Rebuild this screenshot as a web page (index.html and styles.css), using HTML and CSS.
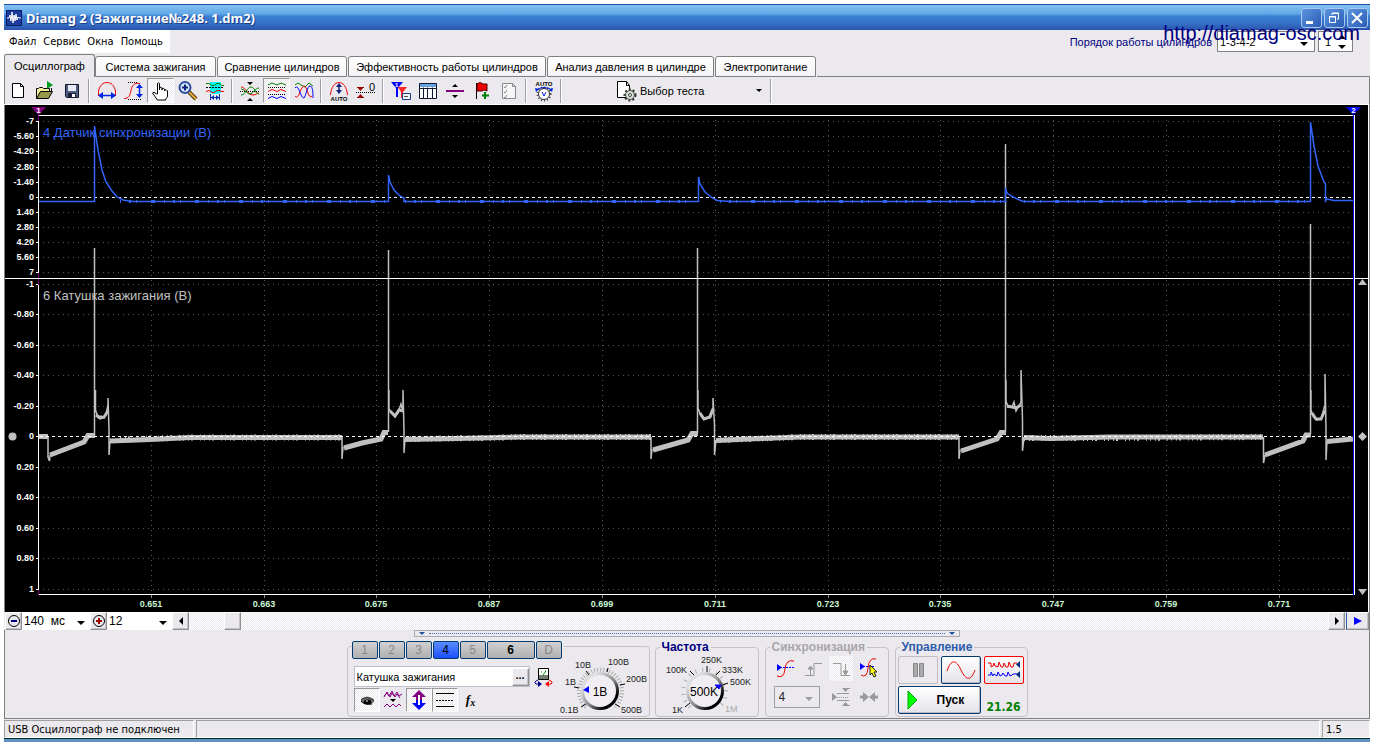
FILE: index.html
```html
<!DOCTYPE html>
<html lang="ru">
<head>
<meta charset="utf-8">
<title>Diamag 2</title>
<link rel="stylesheet" href="styles.css">
</head>
<body>
<div class="window">
  <header class="titlebar">
    <svg class="app-icon" viewBox="0 0 16 16"><rect width="16" height="16" fill="#1c3c9c"/><rect x=".5" y=".5" width="15" height="15" fill="none" stroke="#0a1c68"/><path d="M1 8h2l1-3 1 6 1-9 1 11 1-8 1 6 1-7 1 6 1-3 1 1h2" fill="none" stroke="#fff"/></svg>
    <h1 class="title">Diamag 2 (Зажигание№248. 1.dm2)</h1>
    <button class="win-btn" aria-label="Свернуть"><svg viewBox="0 0 18 18"><path d="M4 12h7v3H4z" fill="#fff"/></svg></button>
    <button class="win-btn" aria-label="Восстановить"><svg viewBox="0 0 18 18" fill="none" stroke="#fff"><path d="M7 6V4.500h6.500V10H12M7 4h7"/><path d="M4.500 7.500h6v6h-6zM4 8h7"/></svg></button>
    <button class="win-btn" aria-label="Закрыть"><svg viewBox="0 0 18 18"><path d="M4 4l10 10M14 4L4 14" stroke="#fff" stroke-width="2"/></svg></button>
    <span class="site">http://diamag-osc.com</span>
  </header>

  <div class="menurow">
    <nav class="menu"><button>Файл</button><button>Сервис</button><button>Окна</button><button>Помощь</button></nav>
    <div class="order">
      <label for="order">Порядок работы цилиндров</label>
      <span class="combo order-combo"><select id="order"><option>1-3-4-2</option></select></span>
      <span class="spin"><input type="text" value="1" aria-label="Цилиндр"><svg viewBox="0 0 8 14"><path d="M0 4l4-4 4 4zM0 10h8l-4 4z"/></svg></span>
    </div>
  </div>

  <nav class="tabs">
    <button class="tab active">Осциллограф</button><button class="tab">Система зажигания</button><button class="tab">Сравнение цилиндров</button><button class="tab">Эффективность работы цилиндров</button><button class="tab">Анализ давления в цилиндре</button><button class="tab">Электропитание</button><span class="tab-rest"></span>
  </nav>

  <div class="toolbar">
    <button class="tool" aria-label="Новый"><svg viewBox="0 0 24 24"><path d="M6.500 4.500h8l3 3v11h-11zM14.500 4.500v3h3" fill="#fff" stroke="#000"/></svg></button>
    <button class="tool" aria-label="Открыть"><svg viewBox="0 0 24 24"><path d="M3.500 19.500v-10h2l1-1h3l1 1h6v3" fill="#f4eca0" stroke="#000"/><path d="M3.500 19.500l4-7h12l-4 7z" fill="#98984c" stroke="#000"/><path d="M14 2l6 4-6 4z" fill="#009a20"/><path d="M18.500 9v4" stroke="#000"/></svg></button>
    <button class="tool" aria-label="Сохранить"><svg viewBox="0 0 24 24"><path d="M5.500 5.500h13v13h-12l-1-1z" fill="#526080" stroke="#101830"/><path d="M8 6h8v6H8z" fill="#e8ecf4"/><path d="M8 14h8v5H8z" fill="#18203c"/><path d="M12 15h3v3h-3z" fill="#fff"/></svg></button>
    <i class="sep"></i>
    <button class="tool" aria-label="Период"><svg viewBox="0 0 24 24"><path d="M3.500 17V12C5 6 8 3.500 12 3.500S19 6 20.500 12v5" fill="none" stroke="#e00"/><path d="M4 16.500h16" stroke="#0028e8" stroke-width="1.500"/><path d="M8 13v7l-5-3.500zM16 13v7l5-3.500z" fill="#0028e8"/></svg></button>
    <button class="tool" aria-label="Амплитуда"><svg viewBox="0 0 24 24"><path d="M2 19.500c5 0 6-3 7-8s3-8 9-7" fill="none" stroke="#e00"/><path d="M6 3.500h10M6 20.500h13" stroke="#000" stroke-dasharray="1 1"/><path d="M17.500 6v12" stroke="#0028e8" stroke-width="1.500"/><path d="M14 9l3.500-4L21 9zM14 15l3.500 4 3.500-4z" fill="#0028e8"/></svg></button>
    <button class="tool pressed" aria-label="Рука"><svg viewBox="0 0 24 24"><path d="M8.500 15V4.500q1.500-1.500 2 0V11V8.500q2-1 2.500 1V11V9.500q2-1 2.500 1V12v-1q2-1 3 1v5c0 2-2 2-2 4h-8l-5-7q1-2 4 1z" fill="#fff" stroke="#000"/></svg></button>
    <button class="tool" aria-label="Масштаб"><svg viewBox="0 0 24 24"><path d="M13 13l7 7" stroke="#5a3808" stroke-width="4"/><path d="M13 13l7 7" stroke="#dcae3c" stroke-width="2"/><circle cx="9" cy="8.500" r="5.500" fill="#d8ecfa" stroke="#304ca0" stroke-width="2"/><path d="M6 8.500h6M9 5.500v6" stroke="#102080" stroke-width="2"/></svg></button>
    <button class="tool" aria-label="Фильтр"><svg viewBox="0 0 24 24"><path d="M7 3h11v11h-2v1H9v-1H7z" fill="#00f4f4"/><path d="M3 4.500h3l3 2h2l3-2h2l3 2h2" fill="none" stroke="#008000"/><path d="M3 8.500h18" stroke="#000" stroke-dasharray="2 1"/><path d="M3 12.500l3-1 3 2h2l3-2h2l3 1h2" fill="none" stroke="#e00"/><path d="M7.500 15v6m9-6v6M8 18.500h8" stroke="#0030b0"/><path d="M11 16v5l-3-2.500zM13 16v5l3-2.500z" fill="#0030b0"/></svg></button>
    <i class="sep"></i>
    <button class="tool" aria-label="Совместить"><svg viewBox="0 0 24 24"><path d="M2 12.500h20" stroke="#000" stroke-dasharray="1 1"/><path d="M3 8c5 0 6 8 12 8 3 0 4-2 6-2" fill="none" stroke="#e00"/><path d="M3 16c5 0 6-8 10-8 4 0 4 7 8 7M3 10c4 0 6 5 9 5s5-6 9-6" fill="none" stroke="#008000"/><path d="M9 3h6l-3 3zM9 22h6l-3-3z"/></svg></button>
    <button class="tool pressed" aria-label="Разделить"><svg viewBox="0 0 24 24" fill="none"><path d="M3 6l4-2 5 2 4-2 5 2" stroke="#008000"/><path d="M3 12.500l4-2 5 2 4-2 5 2" stroke="#e00"/><path d="M3 19.500l4-2 5 2 4-2 5 2" stroke="#00f"/><path d="M3 8.500h18M3 15.500h18" stroke="#000" stroke-dasharray="1 1"/></svg></button>
    <button class="tool" aria-label="Наложить"><svg viewBox="0 0 24 24" fill="none"><path d="M3 6l3-2 3 2 4 2 4-4 4 3" stroke="#008000"/><path d="M3 17c4 5 5-9 9-10 4 1 4 14 8 10" stroke="#e00"/><path d="M3 9c4-5 5 10 9 10 2-2 3-12 6-12s3 8 3 12" stroke="#00f"/></svg></button>
    <i class="sep"></i>
    <button class="tool" aria-label="Автомасштаб"><svg viewBox="0 0 24 24"><path d="M3.500 16C4 8 8 3.500 12 3.500S20 8 20.500 16" fill="none" stroke="#e00"/><path d="M12 6v8" stroke="#102080" stroke-width="1.500"/><path d="M9 8l3-4 3 4zM9 11l3 4 3-4z" fill="#102080"/><text class="tiny" x="12" y="21.500" text-anchor="middle">AUTO</text></svg></button>
    <button class="tool" aria-label="Ноль"><svg viewBox="0 0 24 24"><path d="M3 8h7l-3.500 4zM3 19h7l-3.500-4z" fill="#900"/><path d="M3 8.500h7M3 18.500h7" stroke="#900"/><path d="M2 13.500h20" stroke="#000" stroke-dasharray="1 1"/><text class="zero" x="15" y="12">0</text></svg></button>
    <i class="sep"></i>
    <button class="tool" aria-label="Маркеры"><svg viewBox="0 0 24 24"><path d="M2 3h12L9 9v9H7V9z" fill="#00f"/><path d="M9 8h9l-4 5v6h-2v-6z" fill="#f00" fill-opacity=".85"/><path d="M13.500 14.500h8v6h-8z" fill="#eef4fc" stroke="#1c3c88"/><text class="tiny white" x="6" y="8">1</text><path d="M15 17.500h4" stroke="#555"/></svg></button>
    <button class="tool" aria-label="Таблица"><svg viewBox="0 0 24 24"><path d="M3.500 4.500h17v15h-17z" fill="#fff" stroke="#101830"/><path d="M4 5h16v3H4z" fill="#6aa4e0"/><path d="M3.500 9.500h17m-13-1v11m4-11v11m5-11v11" stroke="#101830" fill="none"/></svg></button>
    <button class="tool" aria-label="Линия"><svg viewBox="0 0 24 24"><path d="M3 12h18" stroke="#800080" stroke-width="2"/><path d="M9 8h6l-3-3zM9 16h6l-3 3z"/></svg></button>
    <button class="tool" aria-label="Флаг"><svg viewBox="0 0 24 24"><path d="M6.500 4v16" stroke="#000"/><path d="M7 5q3-3 6 0h4v7q-3-2-5 0H7z" fill="#e00" stroke="#500"/><path d="M15 13v7m-3-3.500h7" stroke="#008000" stroke-width="2"/></svg></button>
    <button class="tool" aria-label="Список"><svg viewBox="0 0 24 24" fill="none" stroke="#888"><path d="M5.500 4.500h10l3 3v12h-13z" fill="#f6f6f6"/><path d="M15.500 4.500v3h3M7 8l1 1 2-3m-3 7l1 1 2-3m-3 7l1 1 2-3"/></svg></button>
    <i class="sep"></i>
    <button class="tool" aria-label="Авто вольтметр"><svg viewBox="0 0 24 24"><text class="tiny" x="12" y="7" text-anchor="middle">AUTO</text><circle cx="12" cy="15" r="6.500" fill="none" stroke="#333" stroke-dasharray="1 2" stroke-width="2"/><circle cx="12" cy="15" r="5.500" fill="#fff" stroke="#333"/><path d="M4 11q8-5 16 0" fill="none" stroke="#0020e0"/><path d="M3 9l4 1-3 3zM21 9l-4 1 3 3z" fill="#0020e0"/><path d="M10 13l2 4 2-4" fill="none" stroke="#0020e0"/></svg></button>
    <i class="sep"></i>
    <button class="test-select"><svg viewBox="0 0 24 24"><path d="M4.500 2.500h9l3 4v12h-12z" fill="#fff" stroke="#000"/><path d="M13.500 2.500v4h3" fill="none" stroke="#000"/><circle cx="17" cy="16" r="5.500" fill="none" stroke="#333" stroke-width="2" stroke-dasharray="2 2"/><circle cx="17" cy="16" r="4.500" fill="#d0e0d0" stroke="#444"/><circle cx="17" cy="16" r="1.500" fill="#fff" stroke="#444"/></svg><span>Выбор теста</span><i class="caret"></i></button>
    <i class="sep"></i>
  </div>

  <main class="plot">
    <svg class="chart" viewBox="5 105 1363 507">
      <rect x="5" y="105" width="1363" height="507"/>
      <g class="grid">
        <path d="M43 121.500H1352M43 136.500H1352M43 151.500H1352M43 167.500H1352M43 182.500H1352M43 212.500H1352M43 227.500H1352M43 242.500H1352M43 257.500H1352M43 272.500H1352"/>
        <path d="M43 284.500H1352M43 314.500H1352M43 345.500H1352M43 375.500H1352M43 406.500H1352M43 467.500H1352M43 497.500H1352M43 528.500H1352M43 558.500H1352M43 589.500H1352"/>
        <path d="M151.500 120V594M264.500 120V594M376.500 120V594M489.500 120V594M602.500 120V594M715.500 120V594M828.500 120V594M940.500 120V594M1053.500 120V594M1166.500 120V594M1279.500 120V594"/>
      </g>
      <path class="coil thick" d="M39 436.500H48M50 455L84 442L88 435.500H95M110 441L150 439.500L190 437.500H342M344 448L362 443L381 439L384 432.500H388M405 439.500L480 438L520 437H651M653 450L688 440L692 433.500H698M716 440.500L760 438.500L800 437H959M961 451L997 439L1001 432.500H1006M1024 437.500L1050 438.500L1110 437H1263M1265 455L1303 441L1306 435H1311M1327 441.500L1353 439"/>
      <path class="noise" d="M120 439.500L190 437.500H342M410 439L480 438L520 437H651M720 440L800 437H959M1024 438H1110L1262 437"/>
      <path class="coil" d="M48 436V457L49.500 461L50 455M94.500 436V248M95.500 390V410L98 417L101 416L104 418L106 414L108 405V398L109 430V455L110 441"/>
      <path class="coil" d="M342 437V459L343 447M388.500 432V250M389 390V409L391 412L395 417L398 413L401 404L403 412V390L404 430V453L405 439"/>
      <path class="coil" d="M651 437V459L652 449M697.500 433V248M698 390V408L701 416L705 419L709 417L713 408V398L714.500 425V455L716 440"/>
      <path class="coil" d="M959 437V459L960 450M1005.500 432V144M1006 380V401L1008 407L1012 407L1014 402L1016 411L1021 402V370L1022.500 420V451L1024 437"/>
      <path class="coil" d="M1263.500 437V463L1265 455M1310.500 434V224M1311 390V410L1313 416L1317 420L1321 419L1325 405V374L1326 430V460L1327 441"/>
      <path class="cluster" d="M96 415l4 3 4-1 4-6M390 411l5 5 4-6 4 1M700 413l4 6 6-2 3-8M1007 406l5 1 4 1 5-3M1312 413l4 6 5 0 4-9"/>
      <path class="zero-line" d="M40 197.500H1353M40 436.500H1353"/>
      <path class="sync" d="M39 201.500H94.500V126L98 150L102 170L106 182L112 191L117 197L123 200L133 201.500H388.500V175L390 182L394 190L400 196L404 198V201.500H698.500V177L700 184L705 192L711 197L717 200.500L730 201.500H1005.500V188L1007 193L1013 197L1023 201.500H1310.500V122L1314 146L1318 166L1324 182L1325.500 184V201L1327 199L1334 200.500H1353"/>
      <path class="sync-noise" d="M120 201.500H388M405 201.500H698M720 201.500H1005M1024 201.500H1310"/>
      <path class="frame" d="M38.500 115V595M38 115.500H1355M5 278.500H1368M38 594.500H1355M1354.500 115V595"/>
      <path class="frame" d="M36 121.500h3M36 136.500h3M36 151.500h3M36 167.500h3M36 182.500h3M36 197.500h3M36 212.500h3M36 227.500h3M36 242.500h3M36 257.500h3M36 272.500h3M36 284.500h3M36 314.500h3M36 345.500h3M36 375.500h3M36 406.500h3M36 436.500h3M36 467.500h3M36 497.500h3M36 528.500h3M36 558.500h3M36 589.500h3"/>
      <path class="frame dim" d="M151.500 595v3M264.500 595v3M376.500 595v3M489.500 595v3M602.500 595v3M715.500 595v3M828.500 595v3M940.500 595v3M1053.500 595v3M1166.500 595v3M1279.500 595v3"/>
      <path d="M1353.500 107V595" stroke="#0000e8"/>
      <path d="M38.500 112V121M38.500 273V278M38.500 279V285M38.500 590V595" stroke="#800080"/>
      <path d="M31 107h15l-7.500 8z" fill="#800080"/><path d="M1346 107h15l-7.500 8z" fill="#00f"/>
      <g class="marker-no"><text x="38.500" y="113">1</text><text x="1353.500" y="113">2</text></g>
      <g class="handles"><circle cx="12.500" cy="436.500" r="4"/><path d="M1358 285h9l-4.500-6zM1358 589h9l-4.500 6zM1362.500 432l4.500 4.500-4.500 4.500-4.500-4.500z"/></g>
      <g class="y-labels">
        <text x="34" y="124">-7</text><text x="34" y="139">-5.60</text><text x="34" y="154">-4.20</text><text x="34" y="170">-2.80</text><text x="34" y="185">-1.40</text><text x="34" y="200">0</text><text x="34" y="215">1.40</text><text x="34" y="230">2.80</text><text x="34" y="245">4.20</text><text x="34" y="260">5.60</text><text x="34" y="275">7</text>
        <text x="34" y="287">-1</text><text x="34" y="317">-0.80</text><text x="34" y="348">-0.60</text><text x="34" y="378">-0.40</text><text x="34" y="409">-0.20</text><text x="34" y="439">0</text><text x="34" y="470">0.20</text><text x="34" y="500">0.40</text><text x="34" y="531">0.60</text><text x="34" y="561">0.80</text><text x="34" y="592">1</text>
      </g>
      <g class="x-labels">
        <text x="151" y="607">0.651</text><text x="264" y="607">0.663</text><text x="376" y="607">0.675</text><text x="489" y="607">0.687</text><text x="602" y="607">0.699</text><text x="715" y="607">0.711</text><text x="828" y="607">0.723</text><text x="940" y="607">0.735</text><text x="1053" y="607">0.747</text><text x="1166" y="607">0.759</text><text x="1279" y="607">0.771</text>
      </g>
      <text class="channel-name blue" x="43" y="137">4 Датчик синхронизации (В)</text>
      <text class="channel-name" x="43" y="300">6 Катушка зажигания (В)</text>
    </svg>
  </main>

  <div class="timeline">
    <button class="raised" aria-label="Уменьшить"><svg viewBox="0 0 16 16"><circle cx="8" cy="8" r="5.500" fill="none" stroke="#000"/><path d="M5 8h6" stroke="#000080" stroke-width="2"/></svg></button>
    <span class="combo time-combo"><select aria-label="Развёртка"><option>140&nbsp; мс</option></select></span>
    <button class="raised" aria-label="Увеличить"><svg viewBox="0 0 16 16"><circle cx="8" cy="8" r="5.500" fill="none" stroke="#000"/><path d="M5 8h6M8 5v6" stroke="#900" stroke-width="2"/></svg></button>
    <span class="combo div-combo"><select aria-label="Деления"><option>12</option></select></span>
    <button class="raised" aria-label="Назад"><svg viewBox="0 0 16 16"><path d="M10 4v8L6 8z"/></svg></button>
    <div class="track"><button class="raised thumb" aria-label="Прокрутка"></button></div>
    <button class="raised" aria-label="Вперёд"><svg viewBox="0 0 16 16"><path d="M6 4v8l4-4z"/></svg></button>
    <button class="raised play" aria-label="Воспроизвести"><svg viewBox="0 0 16 16"><path d="M4 4v8l8-4z" fill="#00f"/></svg></button>
  </div>

  <section class="controls">
    <div class="splitter"><i class="caret"></i><span></span><i class="caret"></i></div>
    <div class="groups">
      <div class="group channel-group">
        <div class="channel-main">
          <div class="channels"><button>1</button><button>2</button><button>3</button><button class="on">4</button><button>5</button><button class="current">6</button><button>D</button></div>
          <div class="name-row">
            <span class="name-box"><input type="text" value="Катушка зажигания" aria-label="Имя канала"><button class="raised more" aria-label="Выбрать">...</button></span>
            <button class="tool" aria-label="Датчик"><svg viewBox="0 0 24 24"><path d="M6.500 3.500h10v11h-10z" fill="#fff" stroke="#000"/><path d="M7 10h9v4H7z" fill="#708070"/><path d="M9 7h1m3-1h1m-3 4l3-4" stroke="#080"/><path d="M6 15q-5 2-2 4h3" fill="none" stroke="#000090"/><path d="M6 16l4 3-4 3z" fill="#000090"/><path d="M17 15q5 2 2 4h-3" fill="none" stroke="#f00"/><path d="M17 16l-4 3 4 3z" fill="#f00"/></svg></button>
          </div>
          <div class="mode-row">
            <button class="tool pressed" aria-label="Показать"><svg viewBox="0 0 24 24"><path d="M6 11q6-5 13 0v3q-5 5-13 0z" fill="#777"/><path d="M6 12q6-5 13 1" fill="none" stroke="#333"/><ellipse cx="12.500" cy="14" rx="4" ry="2.500"/><path d="M6 13q3 4 11 3" stroke="#000" fill="none"/><path d="M11 13h2" stroke="#fff"/></svg></button>
            <button class="tool" aria-label="Сглаживание"><svg viewBox="0 0 24 24" fill="none" stroke="#800080"><path d="M3 9l3-5 2 4 3-5 2 5 3-4 2 4 3-2M3 8l3-3 3 4 2-4 3 4 2-3 3 4"/><path d="M3 19l3-3 3 3 3-3 3 3 3-3 2 2"/><path d="M9 11h6l-3 3z" fill="#000" stroke="none"/></svg></button>
            <button class="tool pressed" aria-label="Сдвиг"><svg viewBox="0 0 24 24"><path d="M12 2l7 7h-4v3H9V9H5z" fill="#800080"/><path d="M12 22l7-7h-4v-3H9v3H5z" fill="#00f"/><path d="M12 7v10" stroke="#fff" stroke-width="2"/></svg></button>
            <button class="tool pressed" aria-label="Уровни"><svg viewBox="0 0 24 24"><path d="M3 5.500h18M3 18.500h18" stroke="#000"/><path d="M3 12.500h18" stroke="#000" stroke-dasharray="2 1"/></svg></button>
            <button class="tool fx" aria-label="Функция"><i>f</i><i class="sub">x</i></button>
          </div>
        </div>
        <svg class="dial" viewBox="557 652 92 62" role="img" aria-label="Диапазон 1В">
          <defs><linearGradient id="rim" x1="0" y1="0" x2="1" y2="1"><stop offset=".2" stop-color="#ddd"/><stop offset=".55" stop-color="#888"/><stop offset=".8" stop-color="#000"/></linearGradient></defs>
          <path d="M586 706A21.500 21.500 0 1 1 615 706" fill="none" stroke="#aaa" stroke-width="4" stroke-dasharray="1 2"/>
          <path d="M581 706l5-3M574 686l5 1M586 670l3 4M608 667l-1 4M625 683l-5 1M620 706l-5-3" stroke="#000"/>
          <circle cx="600" cy="690" r="17.500" fill="#f0eef2" stroke="url(#rim)" stroke-width="3"/>
          <path d="M583 689l6-4v7z" fill="#00f"/>
          <text class="value" x="600" y="695">1В</text>
          <g class="scale"><text x="560" y="712">0.1В</text><text x="565" y="684">1В</text><text x="575" y="667">10В</text><text x="608" y="664">100В</text><text x="626" y="681">200В</text><text x="621" y="712">500В</text></g>
        </svg>
      </div>

      <fieldset class="group freq-group">
        <legend>Частота</legend>
        <svg class="dial" viewBox="656 652 102 62" role="img" aria-label="Частота 500K">
          <path d="M690 706A21.500 21.500 0 1 1 719 706" fill="none" stroke="#aaa" stroke-width="4" stroke-dasharray="1 6"/>
          <path d="M685 706l5-4M690 670l4 4M707 665v6M720 670l-4 4M728 682l-5 2" stroke="#000"/>
          <circle cx="705" cy="690" r="17.500" fill="#f0eef2" stroke="url(#rim)" stroke-width="3"/>
          <path d="M715 684l6 0-2 4z" fill="#00f" stroke="#00f"/>
          <text class="value" x="704" y="695">500K</text>
          <g class="scale"><text x="672" y="712">1K</text><text x="666" y="672">100K</text><text x="701" y="662">250K</text><text x="722" y="672">333K</text><text x="730" y="684">500K</text><text class="off" x="725" y="711">1M</text></g>
        </svg>
      </fieldset>

      <fieldset class="group sync-group">
        <legend>Синхронизация</legend>
        <div class="sync-icons">
          <button class="tool" aria-label="По уровню"><svg viewBox="0 0 24 24"><path d="M4 19q7 3 8-7t9-8" fill="none" stroke="#e00"/><path d="M4 10.500h17" stroke="#00f" stroke-dasharray="2 1"/><path d="M4 7v7l5-3.500z" fill="#00f"/></svg></button>
          <button class="tool" aria-label="Передний фронт"><svg viewBox="0 0 24 24" fill="none" stroke="#999"><path d="M4 18.500h9v-12h8"/><path d="M9.500 18v-9M7 12l2.500-3 2.500 3z" fill="#999"/></svg></button>
          <button class="tool hatch" aria-label="Задний фронт"><svg viewBox="0 0 24 24" fill="none" stroke="#999"><path d="M4 6.500h8v12h9"/><path d="M16.500 7v10M14 14l2.500 4 2.500-4z" fill="#999"/></svg></button>
          <button class="tool" aria-label="Курсор"><svg viewBox="0 0 24 24"><path d="M4 18q6 4 7-7t8-9" fill="none" stroke="#e00"/><path d="M3 9.500h14" stroke="#00f" stroke-dasharray="2 1"/><path d="M3 6v7l5-3.500z" fill="#00f"/><path d="M13 8v10l2-2 2 4 2-1-2-4h3z" fill="#ff0" stroke="#222"/></svg></button>
          <span class="combo sync-combo"><select disabled aria-label="Канал"><option>4</option></select></span>
          <button class="tool" aria-label="Сдвинуть"><svg viewBox="0 0 24 24"><path d="M3 8l5 4-5 4zM13 3h7l-3.500 4zM13 21h7l-3.500-4z" fill="#999"/><path d="M8 8.500h12M8 15.500h12M14 3.500h7M14 20.500h7" stroke="#999"/><path d="M8 12.500h12" stroke="#999" stroke-dasharray="1 1"/></svg></button>
          <button class="tool" aria-label="Центр"><svg viewBox="0 0 24 24"><path d="M3 12h5M16 12h5" stroke="#999" stroke-width="3"/><path d="M6 7l6 5-6 5zM18 7l-6 5 6 5z" fill="#999"/></svg></button>
        </div>
      </fieldset>

      <fieldset class="group run-group">
        <legend>Управление</legend>
        <div class="run-grid">
          <button class="run-btn off" disabled aria-label="Пауза"><svg viewBox="0 0 32 24"><path d="M11.500 5.500h4v13h-4zM17.500 5.500h4v13h-4z" fill="#aaa" stroke="#888"/></svg></button>
          <button class="run-btn" aria-label="Один канал"><svg viewBox="0 0 32 24"><path d="M2 13C6 1 11 1 16 12s10 11 14 0" fill="none" stroke="#e00"/></svg></button>
          <button class="run-btn red" aria-label="Все каналы"><svg viewBox="0 0 32 24" fill="none"><path d="M0 5h3v4l2-1 1-3 1 3 3 1 1-5 2 5 2 0 1-4 2 4h2l1-5 2 5 2 0 1-4h3" stroke="#e00"/><path d="M0 17h3v-3l2 4 1-2 3 2 1-4 2 4 2-1 1-2 2 3h2l1-4 2 4 2-1 1-1h4" stroke="#00f"/><path d="M32 3v7l-4-3.500zM32 13v7l-4-3.500z" fill="#003080"/></svg></button>
          <button class="run-btn start"><svg viewBox="0 0 12 20"><path d="M1 1v18l9-9z" fill="#0f0" stroke="#0a0"/></svg><span>Пуск</span></button>
          <output class="reading">21.26</output>
        </div>
      </fieldset>
    </div>
  </section>

  <footer class="status"><span class="cell device">USB Осциллограф не подключен</span><span class="cell message"></span><span class="cell version">1.5</span></footer>
</div>
</body>
</html>
```

FILE: styles.css
```css
* { box-sizing: border-box; }
body { margin: 4px 4px 0; background: #fff; font: 12px "Liberation Sans", Arial, sans-serif; color: #000; }
button, select, input { font: inherit; color: inherit; margin: 0; padding: 0; border: 0; background: none; border-radius: 0; }
svg { display: block; flex: none; }
.window { background: #ebe9ed; border-bottom: 3px solid #5f92c8; }

.titlebar { position: relative; display: flex; align-items: center; gap: 2px; height: 26px; padding: 0 2px; border-top: 1px solid #1c4fa8; background: linear-gradient(#82c0f0, #62a8e6 35%, #3c7fd2 45%, #3470c4 75%, #2a52ac); }
.app-icon { width: 16px; height: 16px; margin-right: 2px; }
.title { flex: 1; margin: 0; font: bold 13px "Noto Sans", sans-serif; color: #fff; text-shadow: 1px 1px 0 #1c3c88; }
.win-btn { width: 21px; height: 20px; border: 1px solid #a8c8f0; border-radius: 3px; background: linear-gradient(135deg, #5a94e0, #2c5cb4); }
.win-btn svg { width: 18px; height: 18px; }
.site { position: absolute; right: 10px; top: 17px; font-size: 20px; line-height: 22px; color: #000080; z-index: 2; }

.menurow { display: flex; justify-content: space-between; height: 24px; }
.menu { display: flex; gap: 7px; height: 23px; padding: 0 7px 0 5px; background: #fff; font: 11px "DejaVu Sans Condensed", "DejaVu Sans", sans-serif; }
.order { display: flex; align-items: center; height: 23px; margin-right: 17px; color: #000080; font-size: 11px; }
.order label { margin-right: 5px; }
.combo { position: relative; display: flex; background: #fff; color: #000; }
.combo select { width: 100%; appearance: none; padding-left: 2px; }
.combo::after { content: ""; position: absolute; right: 6px; top: 50%; border: 4px solid transparent; border-top-color: currentColor; border-bottom: 0; }
.order-combo { width: 98px; height: 21px; border: 1px solid #808080; margin-right: 3px; }
.spin { display: flex; align-items: center; width: 35px; height: 21px; padding: 0 6px; border: 1px solid #808080; background: #fff; color: #000; }
.spin input { width: 100%; min-width: 0; }
.spin svg { width: 8px; height: 14px; }

.tabs { display: grid; grid-template-columns: 91px 122px 131px 199px 168px 102px 1fr; align-items: end; height: 23px; }
.tab { height: 21px; border: 1px solid #808080; border-radius: 3px 3px 0 0; background: linear-gradient(#fff, #f4f3f5); margin-right: 1px; font-size: 11px; white-space: nowrap; }
.tab.active { height: 23px; border-bottom: 0; background: #ebe9ed; margin-right: 0; }
.tab-rest { border-bottom: 1px solid #808080; }

.toolbar { display: flex; align-items: center; height: 28px; border-right: 1px solid #808080; border-bottom: 1px solid #fff; box-shadow: inset 1px 0 #808080; }
.tool { display: flex; align-items: center; justify-content: center; width: 27px; height: 25px; border: 1px solid transparent; }
.tool svg { width: 24px; height: 24px; }
.pressed, .hatch, .track { background: repeating-conic-gradient(#fff 0 25%, #ebe9ed 0 50%) 0 0 / 2px 2px; }
.pressed { border-color: #999 #fff #fff #999; }
.sep { width: 2px; height: 24px; margin: 0 3px; border-left: 1px solid #a0a0a0; border-right: 1px solid #fff; }
.test-select { display: flex; align-items: center; width: 202px; height: 25px; padding: 0 5px 0 48px; font-size: 11px; }
.test-select svg { width: 24px; height: 24px; }
.test-select span { flex: 1; text-align: left; margin-left: 3px; }
.caret { border: 3px solid transparent; border-top-color: currentColor; border-bottom: 0; }
.tiny { font: bold 6px "Liberation Sans", sans-serif; }
.white { fill: #fff; }
.zero { font: 11px "Liberation Sans", sans-serif; }

.plot { border-left: 1px solid #808080; border-right: 1px solid #808080; padding-right: 1px; background: #fff; }
.chart { width: 100%; height: auto; }
.grid path { fill: none; stroke: #585858; stroke-dasharray: 1 4; }
.frame { fill: none; stroke: #fff; }
.dim { stroke: #888; }
.zero-line { stroke: #fff; stroke-dasharray: 3 3; }
.coil { fill: none; stroke: #c0c0c0; stroke-width: 1.5; }
.thick { stroke-width: 5; }
.cluster { fill: none; stroke: #c0c0c0; stroke-width: 3; }
.noise { fill: none; stroke: #c0c0c0; stroke-width: 6; stroke-dasharray: 1 4 1 2 2 7 1 3; }
.sync { fill: none; stroke: #3264fa; stroke-width: 1.5; }
.sync-noise { stroke: #3264fa; stroke-width: 3; stroke-dasharray: 1 8 2 5 1 14 4 9; }
.handles { fill: #c0c0c0; }
.marker-no { font: bold 8px "Liberation Sans", sans-serif; fill: #fff; text-anchor: middle; }
.y-labels { font: bold 9px "Liberation Sans", sans-serif; fill: #fff; text-anchor: end; }
.x-labels { font: bold 9px "Liberation Sans", sans-serif; fill: #c8f8d0; text-anchor: middle; }
.channel-name { font: 13px "Liberation Sans", sans-serif; fill: #c0c0c0; }
.channel-name.blue { fill: #3264fa; }

.timeline { display: flex; height: 18px; padding-left: 1px; border-right: 1px solid #808080; }
.raised { display: flex; flex: none; align-items: center; justify-content: center; width: 17px; height: 18px; border: 1px solid; border-color: #fff #909090 #909090 #fff; box-shadow: inset -1px -1px #c4c2c8; background: #ebe9ed; }
.raised svg { width: 16px; height: 16px; }
.time-combo { width: 68px; }
.div-combo { width: 65px; }
.time-combo::after, .div-combo::after { right: 5px; }
.track { flex: 1; padding-left: 35px; }
.play { width: 23px; border-left: 1px solid #3060b0; margin-left: 1px; }

.controls { display: flex; flex-direction: column; align-items: center; height: 89px; border: 1px solid #808080; border-top: 0; }
.splitter { display: flex; align-items: center; justify-content: space-between; gap: 4px; width: 546px; height: 7px; padding: 0 4px; border: 1px solid #aaa8b0; color: #2050a0; }
.splitter span { flex: 1; border-top: 1px dotted #4070c0; }
.groups { display: flex; align-items: flex-end; gap: 6px; margin-top: 4px; }
.group { margin: 0; min-width: 0; padding: 0; border: 1px solid #c4c2c8; border-radius: 4px; height: 76px; }
.group legend { margin-left: 4px; padding: 0 2px; font-weight: bold; line-height: 12px; color: #2f5cab; }
.channel-group { display: flex; width: 303px; height: 71px; margin-right: -1px; }
.channel-main { width: 210px; padding-left: 4px; margin-top: -6px; }
.channels { display: flex; gap: 1px; width: 212px; background: #ebe9ed; }
.channels button { width: 26px; height: 18px; border: 1px solid #003c74; border-radius: 2px; background: linear-gradient(#d0d0d0, #b0b0b0); color: #888; }
.channels .on { background: linear-gradient(#5a8cff, #1c50ff); color: #000; }
.channels .current { width: 48px; color: #000; font-weight: bold; }
.name-row { display: flex; align-items: center; margin-top: 5px; gap: 1px; }
.name-box { display: flex; align-items: center; width: 176px; height: 21px; margin-left: 2px; border: 1px solid #c0c0c8; background: #fff; font-size: 11px; }
.name-box input { flex: 1; min-width: 0; padding-left: 2px; }
.more { font-weight: bold; line-height: 8px; padding-bottom: 4px; }
.mode-row { display: flex; margin-top: -1px; padding-left: 2px; }
.mode-row .tool { width: 26px; height: 24px; }
.fx { font: italic bold 13px "Liberation Serif", serif; }
.sub { font-size: 10px; margin-top: 4px; }
.channel-group .dial { width: 92px; height: 62px; margin-top: 6px; margin-left: -1px; }
.freq-group { width: 104px; }
.freq-group legend { color: #000080; }
.freq-group .dial { width: 102px; height: 62px; }
.value { font: 12px "Liberation Sans", sans-serif; text-anchor: middle; }
.scale { font: 9px "Liberation Sans", sans-serif; fill: #222; }
.off { fill: #aaa; }
.sync-group { width: 124px; }
.sync-group legend { color: #a8a6ac; }
.sync-icons { display: grid; grid-template-columns: repeat(4, 28px); align-items: center; gap: 3px 0; padding: 3px 0 0 7px; }
.sync-icons .tool { width: 24px; }
.sync-combo { grid-column: span 2; width: 46px; height: 22px; border: 1px solid #a0a0a0; background: #ebe9ed; color: #a0a0a0; margin-left: 1px; }
.sync-combo select { padding-left: 4px; color: #222; opacity: 1; }
.run-group { width: 133px; }
.run-grid { display: grid; grid-template-columns: repeat(3, 40px); gap: 2px 3px; padding: 3px 2px 0; }
.run-btn { display: flex; align-items: center; justify-content: center; height: 28px; border: 1px solid #003c74; border-radius: 2px; background: linear-gradient(#fff, #e4e2e8); box-shadow: inset -1px -1px #b8b8c4; font-weight: bold; }
.run-btn svg { width: 32px; height: 24px; }
.run-btn.off { border-color: #c0bec4; background: #ebe9ed; box-shadow: none; }
.run-btn.red { border-color: #f00; box-shadow: none; }
.run-btn.start { grid-column: span 2; justify-content: flex-start; padding-left: 8px; gap: 18px; }
.run-btn.start svg { width: 12px; height: 20px; }
.reading { align-self: end; text-align: center; font: bold 12px "DejaVu Sans Condensed", "DejaVu Sans", sans-serif; color: #008000; }

.status { display: flex; gap: 2px; height: 20px; padding-top: 1px; border-bottom: 1px solid #003020; font: 11px "DejaVu Sans Condensed", "DejaVu Sans", sans-serif; }
.cell { display: flex; align-items: center; padding-left: 3px; border: 1px solid; border-color: #a0a0a0 #fff #fff #a0a0a0; }
.device { width: 190px; }
.message { flex: 1; }
.version { width: 48px; }
```
